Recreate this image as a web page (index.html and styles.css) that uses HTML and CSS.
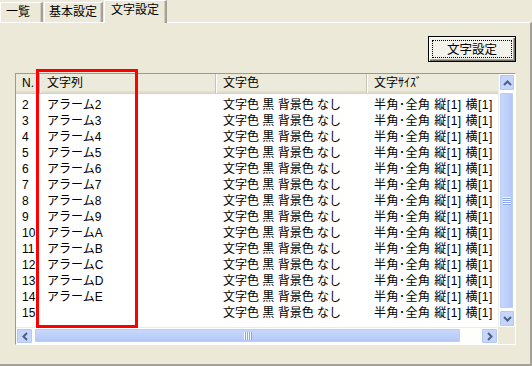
FILE: index.html
```html
<!DOCTYPE html>
<html>
<head>
<meta charset="utf-8">
<link rel="stylesheet" href="styles.css">
</head>
<body>
<div class="window">
  <div class="tabs">
    <div class="tab t1">一覧</div>
    <div class="tab t2">基本設定</div>
    <div class="tab t3 active">文字設定</div>
  </div>
  <div class="panel">
    <div class="toolbar">
      <button class="btn"><span class="focus">文字設定</span></button>
    </div>
    <div class="listwrap">
      <div class="list">
        <div class="view">
          <div class="header">
            <div class="hc c1">N.</div>
            <div class="hc c2">文字列</div>
            <div class="hc c3">文字色</div>
            <div class="hc c4">文字ｻｲｽﾞ</div>
          </div>
          <div class="rows">
            <div class="row"><div class="c c1">2</div><div class="c c2">アラーム2</div><div class="c c3">文字色 黒 背景色 なし</div><div class="c c4 sz">半角･全角 縦[1] 横[1]</div></div>
            <div class="row"><div class="c c1">3</div><div class="c c2">アラーム3</div><div class="c c3">文字色 黒 背景色 なし</div><div class="c c4 sz">半角･全角 縦[1] 横[1]</div></div>
            <div class="row"><div class="c c1">4</div><div class="c c2">アラーム4</div><div class="c c3">文字色 黒 背景色 なし</div><div class="c c4 sz">半角･全角 縦[1] 横[1]</div></div>
            <div class="row"><div class="c c1">5</div><div class="c c2">アラーム5</div><div class="c c3">文字色 黒 背景色 なし</div><div class="c c4 sz">半角･全角 縦[1] 横[1]</div></div>
            <div class="row"><div class="c c1">6</div><div class="c c2">アラーム6</div><div class="c c3">文字色 黒 背景色 なし</div><div class="c c4 sz">半角･全角 縦[1] 横[1]</div></div>
            <div class="row"><div class="c c1">7</div><div class="c c2">アラーム7</div><div class="c c3">文字色 黒 背景色 なし</div><div class="c c4 sz">半角･全角 縦[1] 横[1]</div></div>
            <div class="row"><div class="c c1">8</div><div class="c c2">アラーム8</div><div class="c c3">文字色 黒 背景色 なし</div><div class="c c4 sz">半角･全角 縦[1] 横[1]</div></div>
            <div class="row"><div class="c c1">9</div><div class="c c2">アラーム9</div><div class="c c3">文字色 黒 背景色 なし</div><div class="c c4 sz">半角･全角 縦[1] 横[1]</div></div>
            <div class="row"><div class="c c1">10</div><div class="c c2">アラームA</div><div class="c c3">文字色 黒 背景色 なし</div><div class="c c4 sz">半角･全角 縦[1] 横[1]</div></div>
            <div class="row"><div class="c c1">11</div><div class="c c2">アラームB</div><div class="c c3">文字色 黒 背景色 なし</div><div class="c c4 sz">半角･全角 縦[1] 横[1]</div></div>
            <div class="row"><div class="c c1">12</div><div class="c c2">アラームC</div><div class="c c3">文字色 黒 背景色 なし</div><div class="c c4 sz">半角･全角 縦[1] 横[1]</div></div>
            <div class="row"><div class="c c1">13</div><div class="c c2">アラームD</div><div class="c c3">文字色 黒 背景色 なし</div><div class="c c4 sz">半角･全角 縦[1] 横[1]</div></div>
            <div class="row"><div class="c c1">14</div><div class="c c2">アラームE</div><div class="c c3">文字色 黒 背景色 なし</div><div class="c c4 sz">半角･全角 縦[1] 横[1]</div></div>
            <div class="row"><div class="c c1">15</div><div class="c c2"></div><div class="c c3">文字色 黒 背景色 なし</div><div class="c c4 sz">半角･全角 縦[1] 横[1]</div></div>
          </div>
        </div>
        <div class="vscroll">
          <div class="sbtn"><svg width="9" height="6" viewBox="0 0 9 6"><path d="M1 5 L4.5 1.5 L8 5" fill="none" stroke="#4d6185" stroke-width="2"/></svg></div>
          <div class="vthumb"><span class="vgrip"></span></div>
          <div class="sbtn"><svg width="9" height="6" viewBox="0 0 9 6"><path d="M1 1 L4.5 4.5 L8 1" fill="none" stroke="#4d6185" stroke-width="2"/></svg></div>
        </div>
        <div class="hscroll">
          <div class="sbtn"><svg width="6" height="9" viewBox="0 0 6 9"><path d="M5 1 L1.5 4.5 L5 8" fill="none" stroke="#4d6185" stroke-width="2"/></svg></div>
          <div class="hthumb"><span class="hgrip"></span></div>
          <div class="htrack"></div>
          <div class="sbtn"><svg width="6" height="9" viewBox="0 0 6 9"><path d="M1 1 L4.5 4.5 L1 8" fill="none" stroke="#4d6185" stroke-width="2"/></svg></div>
        </div>
        <div class="corner"></div>
      </div>
      <div class="highlight"></div>
    </div>
  </div>
</div>
</body>
</html>
```
FILE: styles.css
```css
* { box-sizing: border-box; }
html, body { margin: 0; padding: 0; }
body {
  background: #ece9d8;
  font-family: "Liberation Sans", "Noto Sans CJK JP", sans-serif;
  font-size: 12px;
  color: #000;
  width: 532px;
  height: 366px;
  overflow: hidden;
}
.window { display: flex; flex-direction: column; height: 366px; }
.tabs { display: flex; height: 22px; align-items: flex-end; }
.tab {
  height: 20px;
  padding-left: 5px;
  line-height: 19px;
  background: #ece9d8;
  border-top: 1px solid #fff;
  border-left: 1px solid #fff;
  border-right: 2px solid #a5a196;
  box-shadow: inset -1px 0 0 #d0cdbf;
  margin-right: 1px;
  font-size: 12px;
  white-space: nowrap;
}
.t1 { width: 43px; }
.t2 { width: 59px; padding-left: 4px; }
.t3 { width: 63px; padding-left: 6px; }
.tab.active {
  height: 23px;
  margin-bottom: -1px;
  position: relative;
  z-index: 1;
  line-height: 18px;
}
.panel {
  flex: 1;
  border-top: 1px solid #fff;
  border-right: 2px solid #a5a196;
  border-bottom: 2px solid #a5a196;
  display: flex;
  flex-direction: column;
  padding: 0 14px 18px 15px;
  height: 344px;
}
.toolbar { display: flex; justify-content: flex-end; padding-top: 13px; height: 50px; }
.btn {
  width: 88px;
  height: 26px;
  background: #f3f2eb;
  border: 1px solid #000;
  box-shadow: inset 1px 1px 0 #fff, inset -1px -1px 0 #716f64, inset -2px -2px 0 #aca899;
  font-family: "Noto Sans CJK JP", sans-serif;
  font-size: 12.5px;
  padding: 3px;
  display: flex;
}
.focus {
  flex: 1;
  border: 1px dotted #000;
  display: flex;
  align-items: center;
  justify-content: center;
  line-height: 14px;
}
.listwrap { position: relative; flex: 1; }
.list {
  height: 272px;
  border-top: 1px solid #9d9a8d;
  border-left: 1px solid #9d9a8d;
  border-right: 1px solid #fff;
  border-bottom: 1px solid #fff;
  background: #fff;
  display: grid;
  grid-template-columns: 1fr 17px;
  grid-template-rows: 1fr 17px;
}
.view { overflow: hidden; background: #fff; }
.header {
  display: flex;
  height: 20px;
  background: #ebeadb;
  border-bottom: 1px solid #d6d2c2;
  box-shadow: inset 0 -2px 0 #e2decd;
  white-space: nowrap;
}
.hc {
  line-height: 19px;
  padding-left: 6px;
  flex: none;
  border-right: 1px solid #c7c5b2;
  box-shadow: 1px 0 0 #fff;
  margin-right: 1px;
}
.c1 { width: 24px; }
.c2 { width: 175px; }
.c3 { width: 150px; }
.c4 { width: 150px; }
.sz { letter-spacing: 0.5px; }
.rows { padding-top: 3px; }
.row { display: flex; height: 16px; line-height: 16px; white-space: nowrap; }
.c { flex: none; padding-left: 6px; margin-right: 1px; border-right: 1px solid transparent; overflow: hidden; }
.vscroll {
  display: flex;
  flex-direction: column;
  background: #fefefb;
  border-left: 1px solid #eeede5;
}
.sbtn {
  width: 16px;
  height: 17px;
  flex: none;
  background: #c6d6fb;
  border: 1px solid #fff;
  border-radius: 2px;
  box-shadow: inset 0 0 0 1px #b4c8f6;
  display: flex;
  align-items: center;
  justify-content: center;
}
.vthumb {
  flex: 1;
  margin: 1px 1px 1px 0;
  background: linear-gradient(90deg, #c9d8fc, #bccffa 60%, #b2c6f4);
  border: 1px solid #fff;
  border-radius: 2px;
  box-shadow: inset 0 0 0 1px #b9cdf7;
  display: flex;
  align-items: center;
  justify-content: center;
}
.vgrip {
  width: 8px; height: 8px;
  background: repeating-linear-gradient(180deg, #eef4fe 0 1px, #8caaeb 1px 2px);
}
.hscroll {
  display: flex;
  background: #fefefb;
  border-top: 1px solid #eeede5;
}
.hscroll .sbtn { width: 17px; height: 16px; }
.hthumb {
  flex: none;
  width: 427px;
  margin: 0 1px 1px;
  background: linear-gradient(180deg, #c9d8fc, #bccffa 60%, #b2c6f4);
  border: 1px solid #fff;
  border-radius: 2px;
  box-shadow: inset 0 0 0 1px #b9cdf7;
  display: flex;
  align-items: center;
  justify-content: center;
}
.hgrip {
  width: 8px; height: 8px;
  background: repeating-linear-gradient(90deg, #eef4fe 0 1px, #8caaeb 1px 2px);
}
.htrack { flex: 1; }
.corner { background: #ece9d8; }
.highlight {
  position: absolute;
  left: 21px;
  top: -4px;
  width: 102px;
  height: 259px;
  border: 3px solid #ff0000;
  pointer-events: none;
}
```
